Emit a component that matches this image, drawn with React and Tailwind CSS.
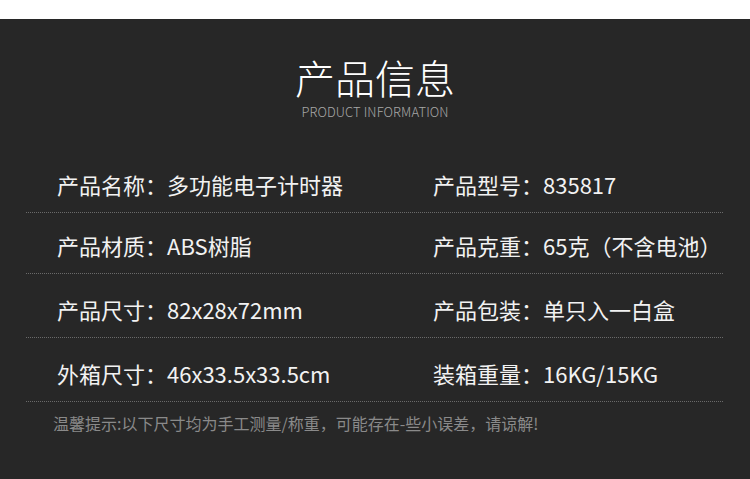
export default function App() {
  const rows = [
    { h: 'h-[194px]', items: [['产品名称：', '多功能电子计时器'], ['产品型号：', '835817']] },
    { h: 'h-[61px]', items: [['产品材质：', 'ABS树脂'], ['产品克重：', '65克（不含电池）']] },
    { h: 'h-[64px]', items: [['产品尺寸：', '82x28x72mm'], ['产品包装：', '单只入一白盒']] },
    { h: 'h-[64px]', items: [['外箱尺寸：', '46x33.5x33.5cm'], ['装箱重量：', '16KG/15KG']] },
  ];
  return (
    <div className="w-[750px] h-[479px] bg-white overflow-hidden font-['Noto_Sans_CJK_SC',sans-serif]">
      <div className="h-[19px] bg-white" />
      <div className="h-[460px] bg-[#272727]">
        <div className="h-0 flex flex-col items-center">
          <div className="mt-[34px] text-[40px] leading-[48px] font-light text-white">产品信息</div>
          <div className="mt-[3px] text-[13px] leading-[16px] font-light text-[#a8a8a8] tracking-[0.1px]">PRODUCT INFORMATION</div>
        </div>
        <div className="ml-[26px] w-[697px]">
          {rows.map((r, i) => (
            <div key={i} className={`${r.h} flex items-end border-b border-dotted border-[#6a6a6a] pb-[17px] pl-[31px]`}>
              <div className="w-[376px] text-[22px] leading-[22px] text-[#f2f2f2]">
                {r.items[0][0]}{r.items[0][1]}
              </div>
              <div className="text-[22px] leading-[22px] text-[#f2f2f2]">
                {r.items[1][0]}{r.items[1][1]}
              </div>
            </div>
          ))}
        </div>
        <div className="mt-[10px] ml-[53px] text-[16px] leading-[22px] text-[#8a8a8a]">
          温馨提示:以下尺寸均为手工测量/称重，可能存在-些小误差，请谅解!
        </div>
      </div>
    </div>
  );
}
